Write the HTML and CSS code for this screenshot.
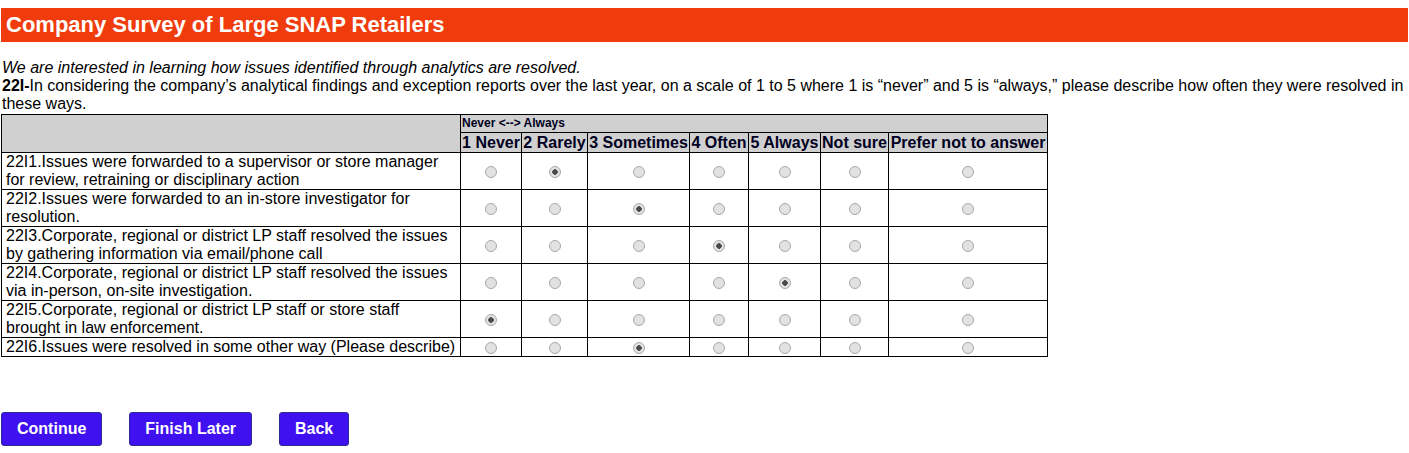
FILE: index.html
```html
<!DOCTYPE html>
<html>
<head>
<meta charset="utf-8">
<title>Company Survey of Large SNAP Retailers</title>
<link rel="stylesheet" href="styles.css">
</head>
<body>
<h1 class="banner">Company Survey of Large SNAP Retailers</h1>
<div class="intro">
  <div class="lead">We are interested in learning how issues identified through analytics are resolved.</div>
  <div class="question"><b>22I-</b>In considering the company’s analytical findings and exception reports over the last year, on a scale of 1 to 5 where 1 is “never” and 5 is “always,” please describe how often they were resolved in these ways.</div>
</div>
<table class="grid">
  <colgroup>
    <col class="c-item"><col class="c1"><col class="c2"><col class="c3"><col class="c4"><col class="c5"><col class="c6"><col class="c7">
  </colgroup>
  <thead>
    <tr class="scale-row"><th rowspan="2"></th><th colspan="7" class="scale">Never &lt;--&gt; Always</th></tr>
    <tr class="label-row"><th>1 Never</th><th>2 Rarely</th><th>3 Sometimes</th><th>4 Often</th><th>5 Always</th><th>Not sure</th><th>Prefer not to answer</th></tr>
  </thead>
  <tbody>
    <tr><td class="item">22I1.Issues were forwarded to a supervisor or store manager for review, retraining or disciplinary action</td>
      <td><input type="radio" name="q1"></td><td><input type="radio" name="q1" checked></td><td><input type="radio" name="q1"></td><td><input type="radio" name="q1"></td><td><input type="radio" name="q1"></td><td><input type="radio" name="q1"></td><td><input type="radio" name="q1"></td></tr>
    <tr><td class="item">22I2.Issues were forwarded to an in-store investigator for resolution.</td>
      <td><input type="radio" name="q2"></td><td><input type="radio" name="q2"></td><td><input type="radio" name="q2" checked></td><td><input type="radio" name="q2"></td><td><input type="radio" name="q2"></td><td><input type="radio" name="q2"></td><td><input type="radio" name="q2"></td></tr>
    <tr><td class="item">22I3.Corporate, regional or district LP staff resolved the issues by gathering information via email/phone call</td>
      <td><input type="radio" name="q3"></td><td><input type="radio" name="q3"></td><td><input type="radio" name="q3"></td><td><input type="radio" name="q3" checked></td><td><input type="radio" name="q3"></td><td><input type="radio" name="q3"></td><td><input type="radio" name="q3"></td></tr>
    <tr><td class="item">22I4.Corporate, regional or district LP staff resolved the issues via in-person, on-site investigation.</td>
      <td><input type="radio" name="q4"></td><td><input type="radio" name="q4"></td><td><input type="radio" name="q4"></td><td><input type="radio" name="q4"></td><td><input type="radio" name="q4" checked></td><td><input type="radio" name="q4"></td><td><input type="radio" name="q4"></td></tr>
    <tr><td class="item">22I5.Corporate, regional or district LP staff or store staff brought in law enforcement.</td>
      <td><input type="radio" name="q5" checked></td><td><input type="radio" name="q5"></td><td><input type="radio" name="q5"></td><td><input type="radio" name="q5"></td><td><input type="radio" name="q5"></td><td><input type="radio" name="q5"></td><td><input type="radio" name="q5"></td></tr>
    <tr><td class="item">22I6.Issues were resolved in some other way (Please describe)</td>
      <td><input type="radio" name="q6"></td><td><input type="radio" name="q6"></td><td><input type="radio" name="q6" checked></td><td><input type="radio" name="q6"></td><td><input type="radio" name="q6"></td><td><input type="radio" name="q6"></td><td><input type="radio" name="q6"></td></tr>
  </tbody>
</table>
<div class="actions">
  <button class="btn" type="button">Continue</button>
  <button class="btn" type="button">Finish Later</button>
  <button class="btn" type="button">Back</button>
</div>
</body>
</html>
```
FILE: styles.css
```css
html, body {
  background: #ffffff;
}
body {
  margin: 8px 1px 0;
  font-family: "Liberation Sans", Arial, sans-serif;
  font-size: 16px;
  color: #000;
}
.banner {
  margin: 0;
  background: #f03c0c;
  color: #ffffff;
  font-size: 22px;
  line-height: 24px;
  font-weight: bold;
  padding: 5px 5px 5px 5px;
}
.intro {
  margin-top: 17px;
  padding-left: 1px;
  line-height: 18px;
}
.lead {
  font-style: italic;
}
.grid {
  border-collapse: collapse;
  table-layout: fixed;
  width: 1046px;
  margin-top: 1px;
}
.grid th, .grid td {
  border: 1px solid #000;
  padding: 0;
}
.c-item { width: 459px; }
.c1 { width: 61px; }
.c2 { width: 66px; }
.c3 { width: 102px; }
.c4 { width: 59px; }
.c5 { width: 72px; }
.c6 { width: 68px; }
.c7 { width: 159px; }
.grid thead th {
  background: #d0d0d0;
}
.scale-row th.scale {
  font-size: 12px;
  line-height: 17px;
  text-align: left;
  padding-left: 1px;
  color: #000022;
}
.label-row th {
  font-size: 16px;
  line-height: 19px;
  text-align: center;
  white-space: nowrap;
  color: #000022;
}
.grid td {
  text-align: center;
  vertical-align: middle;
  line-height: 18px;
}
.grid td.item {
  text-align: left;
  padding: 0 3px 0 4px;
}
.grid input[type="radio"] {
  appearance: none;
  -webkit-appearance: none;
  width: 12px;
  height: 12px;
  margin: 0;
  border: 1px solid #a9a9a9;
  border-radius: 50%;
  background: #e2e2e2;
  vertical-align: middle;
  display: inline-block;
  position: relative;
}
.grid input[type="radio"]:checked {
  background: radial-gradient(circle, #4a4a4a 0 2.5px, #e2e2e2 3px);
}
.actions {
  display: flex;
  gap: 27px;
  margin-top: 55px;
}
.btn {
  height: 34px;
  padding: 0 15px;
  background: #3f10f0;
  color: #ffffff;
  font-family: "Liberation Sans", Arial, sans-serif;
  font-size: 16px;
  font-weight: bold;
  border: 1px solid #2c2c90;
  border-radius: 3px;
  cursor: pointer;
}
```
